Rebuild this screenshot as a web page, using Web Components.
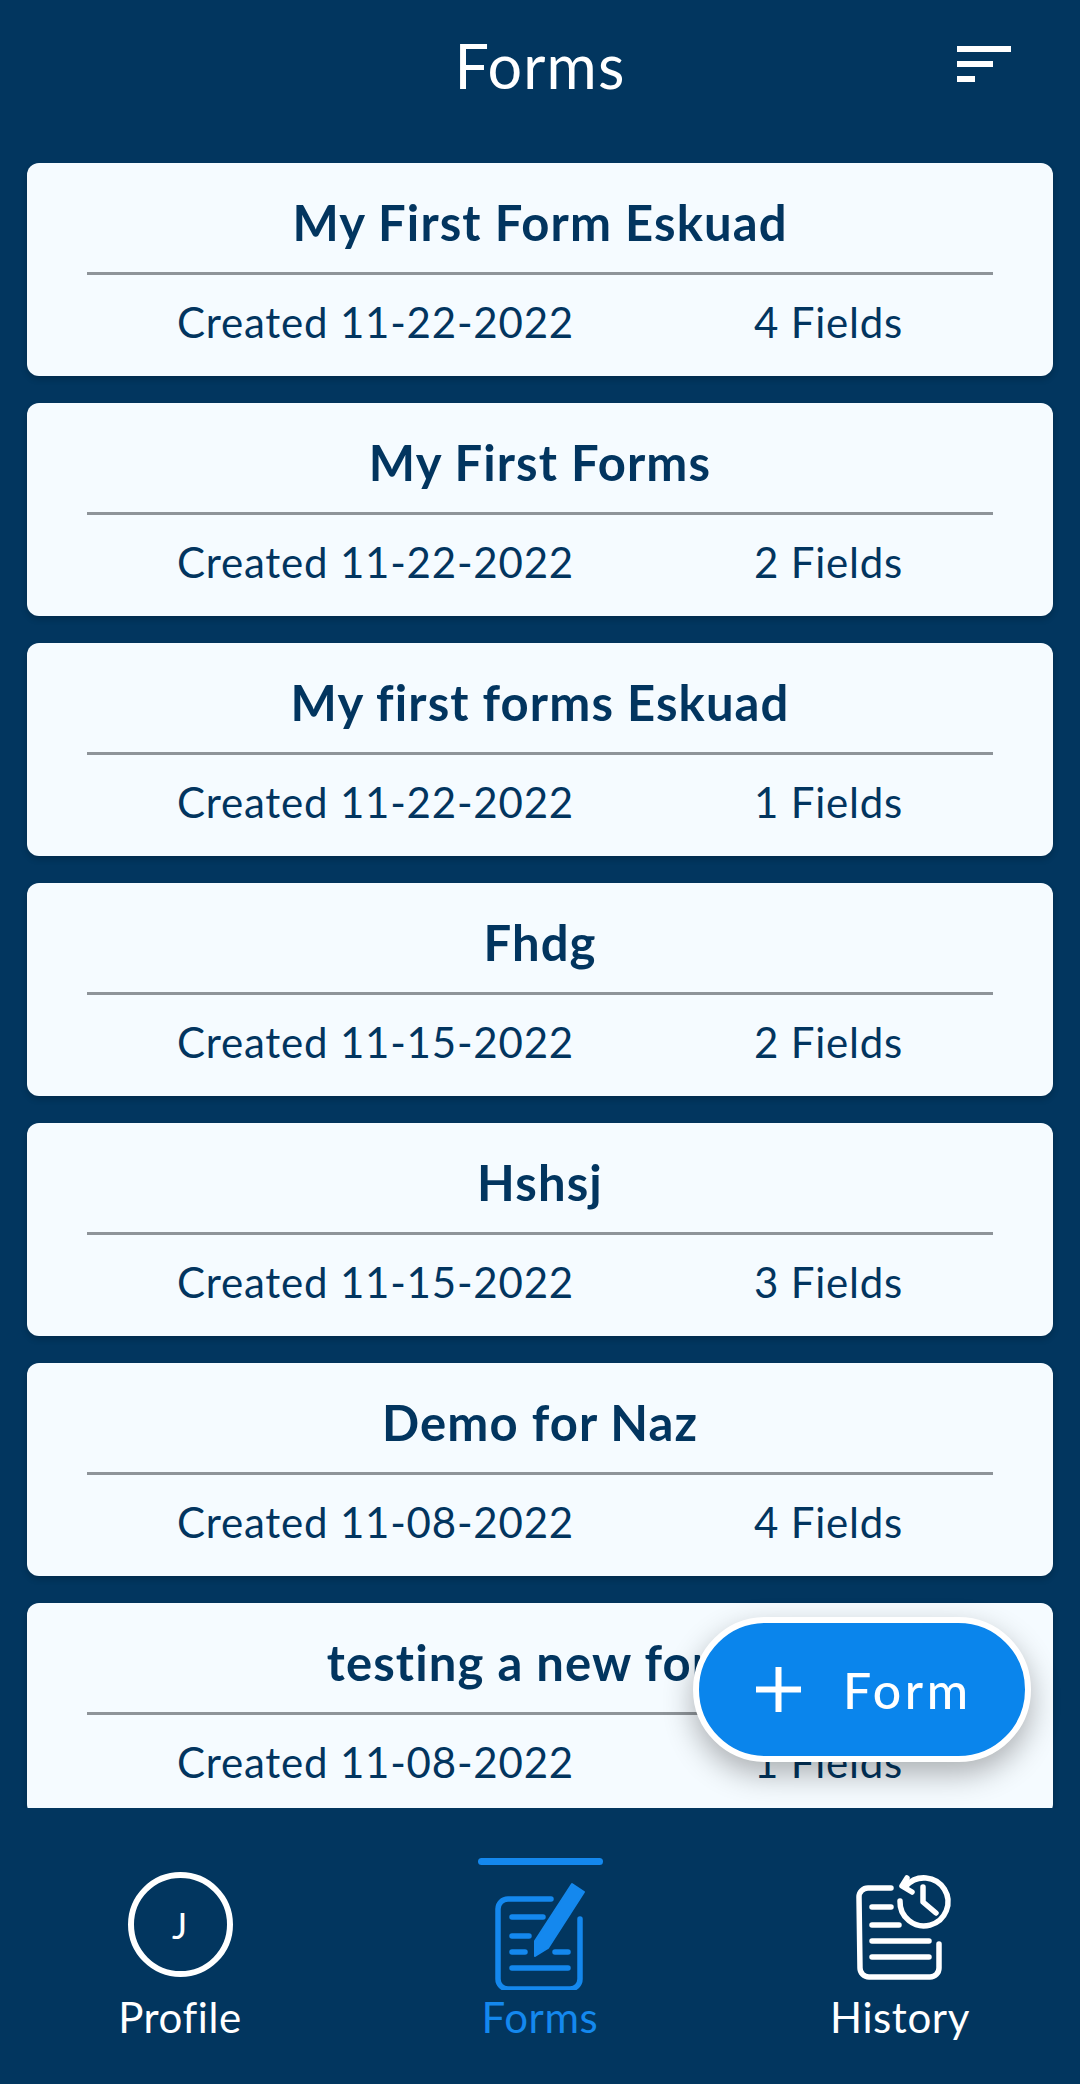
<!DOCTYPE html>
<html>
<head>
<meta charset="utf-8">
<title>Forms</title>
<style>
	html, body { margin: 0; padding: 0; background: #02365f; }
	body { font-family: Lato, "Noto Sans", sans-serif; }
</style>
</head>
<body>
<app-shell>
	<app-header slot="header">Forms</app-header>
	<form-list slot="content">
		<form-card><span slot="title">My First Form Eskuad</span><span slot="date">Created 11-22-2022</span><span slot="count">4 Fields</span></form-card>
		<form-card><span slot="title">My First Forms</span><span slot="date">Created 11-22-2022</span><span slot="count">2 Fields</span></form-card>
		<form-card><span slot="title">My first forms Eskuad</span><span slot="date">Created 11-22-2022</span><span slot="count">1 Fields</span></form-card>
		<form-card><span slot="title">Fhdg</span><span slot="date">Created 11-15-2022</span><span slot="count">2 Fields</span></form-card>
		<form-card><span slot="title">Hshsj</span><span slot="date">Created 11-15-2022</span><span slot="count">3 Fields</span></form-card>
		<form-card><span slot="title">Demo for Naz</span><span slot="date">Created 11-08-2022</span><span slot="count">4 Fields</span></form-card>
		<form-card><span slot="title">testing a new form</span><span slot="date">Created 11-08-2022</span><span slot="count">1 Fields</span></form-card>
	</form-list>
	<add-button slot="fab">Form</add-button>
	<bottom-nav slot="nav">
		<nav-item>
			<user-avatar slot="icon">J</user-avatar>
			Profile
		</nav-item>
		<nav-item active>
			<svg slot="icon" width="120" height="120" viewBox="40 30 120 120" fill="none" stroke="currentColor" stroke-width="5.5" stroke-linecap="round" stroke-linejoin="round">
				<path d="M111 59H68a10 10 0 0 0-10 10v70a10 10 0 0 0 10 10h62a10 10 0 0 0 10-10V79"/>
				<path d="M72 77h31M72 96h17M72 112h13M115 112h13M72 128h56"/>
				<path d="M132 44l12 8-36 56-13 8v-15z" fill="currentColor" stroke-width="2"/>
			</svg>
			Forms
		</nav-item>
		<nav-item>
			<svg slot="icon" width="120" height="120" viewBox="30 20 120 120" fill="none" stroke="currentColor" stroke-width="5.5" stroke-linecap="round" stroke-linejoin="round">
				<path d="M81 38H58a9 9 0 0 0-9 9l1 71a9 9 0 0 0 9 9h61a9 9 0 0 0 9-9V94"/>
				<path d="M62 57h19M62 75h27M62 91h57M62 107h57"/>
				<path d="M90 51A24 24 0 1 0 96 36"/>
				<path d="M97 28l-5 8 10 6"/>
				<path d="M113 37v15l13 11"/>
			</svg>
			History
		</nav-item>
	</bottom-nav>
</app-shell>

<script>
class AppShell extends HTMLElement {
	constructor() {
		super();
		this.attachShadow({ mode: 'open' });
		this.shadowRoot.innerHTML = `
			<style>
				:host {
					display: flex;
					flex-direction: column;
					position: relative;
					height: 2084px;
					overflow: hidden;
					background: #02365f;
				}
				.fab {
					position: absolute;
					left: 693px;
					top: 1617px;
				}
			</style>
			<slot name="header"></slot>
			<slot name="content"></slot>
			<div class="fab"><slot name="fab"></slot></div>
			<slot name="nav"></slot>
		`;
	}
}

class AppHeader extends HTMLElement {
	constructor() {
		super();
		this.attachShadow({ mode: 'open' });
		this.shadowRoot.innerHTML = `
			<style>
				:host {
					display: grid;
					grid-template-columns: 1fr auto 1fr;
					height: 163px;
					padding: 30px 69px 0;
					box-sizing: border-box;
					color: #fff;
				}
				.title {
					grid-column: 2;
					font-size: 61px;
					line-height: 72px;
					letter-spacing: 1.2px;
				}
				.filter {
					justify-self: end;
					display: flex;
					flex-direction: column;
					gap: 9px;
					padding-top: 16px;
					width: 54px;
				}
				.filter i {
					display: block;
					height: 6px;
					background: #fff;
				}
			</style>
			<div class="title"><slot></slot></div>
			<div class="filter">
				<i style="width: 54px"></i>
				<i style="width: 36px"></i>
				<i style="width: 18px"></i>
			</div>
		`;
	}
}

class FormList extends HTMLElement {
	constructor() {
		super();
		this.attachShadow({ mode: 'open' });
		this.shadowRoot.innerHTML = `
			<style>
				:host {
					display: flex;
					flex-direction: column;
					gap: 27px;
					height: 1645px;
					padding: 0 27px;
					box-sizing: border-box;
					overflow: hidden;
				}
			</style>
			<slot></slot>
		`;
	}
}

class FormCard extends HTMLElement {
	constructor() {
		super();
		this.attachShadow({ mode: 'open' });
		this.shadowRoot.innerHTML = `
			<style>
				:host {
					display: block;
					flex: none;
					height: 213px;
					padding: 29px 60px 0;
					box-sizing: border-box;
					background: #f5fbff;
					border-radius: 12px;
					box-shadow: 0 3px 6px rgba(0, 0, 0, .2);
					color: #02355f;
				}
				.title {
					font-size: 49px;
					line-height: 60px;
					font-weight: 700;
					letter-spacing: 1.1px;
					text-align: center;
				}
				hr {
					height: 3px;
					margin: 20px 0 21px;
					border: 0;
					background: #8e9499;
				}
				.row {
					display: flex;
					justify-content: space-around;
					font-size: 42px;
					line-height: 52px;
					letter-spacing: .8px;
				}
			</style>
			<div class="title"><slot name="title"></slot></div>
			<hr>
			<div class="row">
				<slot name="date"></slot>
				<slot name="count"></slot>
			</div>
		`;
	}
}

class AddButton extends HTMLElement {
	constructor() {
		super();
		this.attachShadow({ mode: 'open' });
		this.shadowRoot.innerHTML = `
			<style>
				:host {
					display: flex;
					align-items: center;
					gap: 42px;
					width: 338px;
					height: 145px;
					padding-left: 57px;
					box-sizing: border-box;
					background: #0a85ec;
					border: 6px solid #fff;
					border-radius: 73px;
					box-shadow: 0 12px 30px rgba(0, 0, 0, .3);
					color: #fff;
					font-size: 50px;
					font-weight: 500;
					letter-spacing: 3.6px;
				}
				svg { flex: none; }
			</style>
			<svg width="45" height="45" viewBox="0 0 45 45" fill="#fff">
				<rect x="19.5" width="6" height="45"/>
				<rect y="19.5" width="45" height="6"/>
			</svg>
			<span><slot></slot></span>
		`;
	}
}

class BottomNav extends HTMLElement {
	constructor() {
		super();
		this.attachShadow({ mode: 'open' });
		this.shadowRoot.innerHTML = `
			<style>
				:host {
					display: grid;
					grid-template-columns: repeat(3, 1fr);
					flex: 1;
					padding-top: 50px;
				}
			</style>
			<slot></slot>
		`;
	}
}

class NavItem extends HTMLElement {
	constructor() {
		super();
		this.attachShadow({ mode: 'open' });
		this.shadowRoot.innerHTML = `
			<style>
				:host {
					display: flex;
					flex-direction: column;
					align-items: center;
					color: #fff;
					font-size: 42px;
					line-height: 52px;
					letter-spacing: .6px;
				}
				:host([active]) { color: #1488ee; }
				.bar {
					width: 125px;
					height: 7px;
					border-radius: 4px;
				}
				:host([active]) .bar { background: currentColor; }
				.icon {
					display: flex;
					justify-content: center;
					height: 120px;
					margin: 5px 0 1px;
				}
			</style>
			<div class="bar"></div>
			<div class="icon"><slot name="icon"></slot></div>
			<slot></slot>
		`;
	}
}

class UserAvatar extends HTMLElement {
	constructor() {
		super();
		this.attachShadow({ mode: 'open' });
		this.shadowRoot.innerHTML = `
			<style>
				:host {
					display: flex;
					align-items: center;
					justify-content: center;
					width: 105px;
					height: 105px;
					margin-top: 2px;
					box-sizing: border-box;
					border: 6px solid #fff;
					border-radius: 50%;
					font-size: 36px;
					font-weight: 400;
				}
			</style>
			<slot></slot>
		`;
	}
}

customElements.define('app-shell', AppShell);
customElements.define('app-header', AppHeader);
customElements.define('form-list', FormList);
customElements.define('form-card', FormCard);
customElements.define('add-button', AddButton);
customElements.define('bottom-nav', BottomNav);
customElements.define('nav-item', NavItem);
customElements.define('user-avatar', UserAvatar);
</script>
</body>
</html>
